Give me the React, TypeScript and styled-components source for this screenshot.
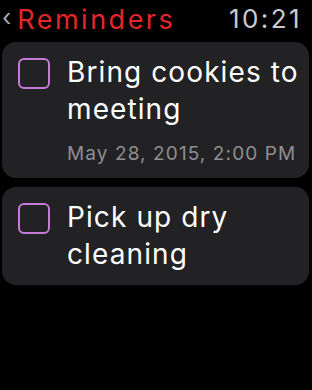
import styled, { createGlobalStyle } from 'styled-components';

interface Reminder {
	id: number;
	title: string;
	due?: string;
}

const reminders: Reminder[] = [
	{ id: 1, title: 'Bring cookies to meeting', due: 'May 28, 2015, 2:00 PM' },
	{ id: 2, title: 'Pick up dry cleaning' },
];

const App = () => {
	return (
		<>
			<GlobalStyle />
			<Screen>
				<Header>
					<BackLink>
						<Chevron>‹</Chevron>
						<Title>Reminders</Title>
					</BackLink>
					<Clock>10:21</Clock>
				</Header>
				<List>
					{reminders.map((r) => (
						<Card key={r.id}>
							<CheckBox />
							<Body>
								<ItemTitle>{r.title}</ItemTitle>
								{r.due && <Due>{r.due}</Due>}
							</Body>
						</Card>
					))}
				</List>
			</Screen>
		</>
	);
};

export default App;

const GlobalStyle = createGlobalStyle`
	html, body {
		margin: 0;
		padding: 0;
		background: #000;
	}
	body {
		font-family: Inter, 'Noto Sans', sans-serif;
	}
`;

const Screen = styled.div`
	width: 312px;
	height: 390px;
	background: #000;
	overflow: hidden;
`;

const Header = styled.div`
	display: flex;
	align-items: center;
	justify-content: space-between;
	height: 38px;
	padding: 0 10px 0 2px;
	box-sizing: border-box;
`;

const BackLink = styled.div`
	display: flex;
	align-items: center;
	gap: 6px;
`;

const Chevron = styled.span`
	color: #a8a8ad;
	font-size: 24px;
	line-height: 1;
	margin-top: -3px;
`;

const Title = styled.span`
	color: #e3262b;
	font-size: 27px;
	letter-spacing: 2.5px;
	line-height: 1;
`;

const Clock = styled.span`
	color: #c9c9ce;
	font-size: 26px;
	letter-spacing: 2.4px;
	line-height: 1;
`;

const List = styled.div`
	display: flex;
	flex-direction: column;
	gap: 9px;
	padding: 4px 3px 0 2px;
`;

const Card = styled.div`
	display: flex;
	align-items: flex-start;
	gap: 17px;
	background: #222224;
	border-radius: 14px;
	padding: 16px 6px 12px 16px;
`;

const CheckBox = styled.div`
	flex: none;
	width: 32px;
	height: 31px;
	box-sizing: border-box;
	border: 2px solid #c47ad8;
	border-radius: 6px;
`;

const Body = styled.div`
	display: flex;
	flex-direction: column;
	margin-top: -4px;
`;

const ItemTitle = styled.div`
	color: #fff;
	font-size: 28px;
	letter-spacing: 1.1px;
	line-height: 37px;
`;

const Due = styled.div`
	color: #8e8e93;
	font-size: 19px;
	letter-spacing: 1.1px;
	line-height: 24px;
	margin-top: 14px;
`;
